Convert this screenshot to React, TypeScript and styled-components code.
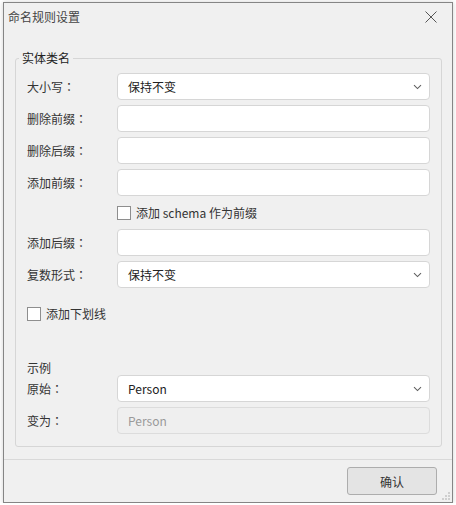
import styled, { createGlobalStyle } from "styled-components";

const GlobalStyle = createGlobalStyle`
  html, body {
    margin: 0;
    padding: 0;
    background: #ffffff;
  }
  body {
    font-family: "Noto Sans CJK SC", "Noto Sans", sans-serif;
    font-size: 12px;
    color: #333;
  }
`;

// styled components
const Window = styled.div`
  position: relative;
  box-sizing: border-box;
  width: 450px;
  height: 501px;
  margin: 2px 0 0 3px;
  border: 1px solid #858585;
  background: #f0f0f0;
  display: flex;
  flex-direction: column;
  box-shadow: 0 0 5px rgba(0, 0, 0, 0.18);
`;

const TitleBar = styled.div`
  height: 28px;
  display: flex;
  align-items: center;
  justify-content: space-between;
  padding: 0 15px 0 4px;
`;

const Title = styled.span`
  font-size: 12px;
  line-height: 16px;
  color: #444;
`;

const CloseButton = styled.button`
  border: 0;
  padding: 0;
  background: transparent;
  width: 12px;
  height: 12px;
  display: flex;
  align-items: center;
  justify-content: center;
  cursor: pointer;
`;

const Body = styled.div`
  flex: 1;
  padding: 27px 10px 0 11px;
`;

const Group = styled.div`
  position: relative;
  box-sizing: border-box;
  border: 1px solid #d6d6d6;
  border-radius: 3px;
  padding: 14px 11px 12px 11px;
`;

const Legend = styled.span`
  position: absolute;
  top: -9px;
  left: 3px;
  padding: 0 3px;
  background: #f0f0f0;
  line-height: 16px;
  color: #222;
`;

const Stack = styled.div`
  display: flex;
  flex-direction: column;
  gap: 5px;
`;

const Row = styled.div<{ $mt?: number }>`
  display: grid;
  grid-template-columns: 90px 1fr;
  align-items: center;
  height: 27px;
  margin-top: ${(p) => p.$mt ?? 0}px;
`;

const Label = styled.label`
  line-height: 16px;
  color: #333;
`;

// the traditional-Chinese face centres the full-width colon, as the reference does
const Colon = styled.span`
  font-family: "Noto Sans CJK TC", "Noto Sans CJK SC", sans-serif;
`;

const TextInput = styled.input`
  box-sizing: border-box;
  width: 100%;
  height: 27px;
  margin: 0;
  padding: 0 10px;
  border: 1px solid #d6d6d6;
  border-radius: 4px;
  background: #fff;
  font: inherit;
  color: #222;
  outline: none;

  &:disabled {
    background: #efefef;
    border-color: #dcdcdc;
    color: #9a9a9a;
  }
`;

const SelectBox = styled.div`
  box-sizing: border-box;
  height: 27px;
  display: flex;
  align-items: center;
  justify-content: space-between;
  padding: 0 7px 0 10px;
  border: 1px solid #d6d6d6;
  border-radius: 4px;
  background: #fff;
  color: #222;
  line-height: 16px;
`;

const CheckRow = styled.div<{ $indent?: number; $mt?: number }>`
  display: flex;
  align-items: center;
  gap: 5px;
  height: 23px;
  margin-left: ${(p) => p.$indent ?? 0}px;
  margin-top: ${(p) => p.$mt ?? 0}px;
  line-height: 16px;
  color: #333;
`;

const CheckBox = styled.span`
  box-sizing: border-box;
  width: 14px;
  height: 14px;
  border: 1px solid #8e8e8e;
  background: #fff;
`;

const SectionTitle = styled.div`
  height: 15px;
  line-height: 15px;
  margin-top: 30px;
  margin-bottom: -5px;
  color: #333;
`;

const Footer = styled.div`
  height: 43px;
  box-sizing: border-box;
  border-top: 1px solid #d9d9d9;
  display: flex;
  justify-content: flex-end;
  align-items: flex-start;
  padding: 7px 15px 0 0;
`;

const PrimaryButton = styled.button`
  width: 90px;
  height: 28px;
  border: 1px solid #adadad;
  border-radius: 3px;
  background: #e4e4e4;
  font: inherit;
  color: #333;
  cursor: pointer;
`;

const Grip = styled.svg`
  position: absolute;
  right: 1px;
  bottom: 1px;
`;

const Chevron = () => (
  <svg width="9" height="6" viewBox="0 0 9 6">
    <path d="M1 1.2 L4.5 4.6 L8 1.2" fill="none" stroke="#606060" strokeWidth="1.1" />
  </svg>
);

type FieldProps = { label: string; mt?: number; children: React.ReactNode };

function Field({ label, mt, children }: FieldProps) {
  return (
    <Row $mt={mt}>
      <Label>
        {label}
        <Colon>：</Colon>
      </Label>
      {children}
    </Row>
  );
}

function Select({ value }: { value: string }) {
  return (
    <SelectBox>
      <span>{value}</span>
      <Chevron />
    </SelectBox>
  );
}

export default function App() {
  return (
    <>
      <GlobalStyle />
      <Window>
        <TitleBar>
          <Title>命名规则设置</Title>
          <CloseButton aria-label="关闭">
            <svg width="12" height="12" viewBox="0 0 12 12">
              <path d="M0.5 0.5 L11.5 11.5 M11.5 0.5 L0.5 11.5" stroke="#555" strokeWidth="1" />
            </svg>
          </CloseButton>
        </TitleBar>

        <Body>
          <Group>
            <Legend>实体类名</Legend>
            <Stack>
              <Field label="大小写">
                <Select value="保持不变" />
              </Field>
              <Field label="删除前缀">
                <TextInput readOnly />
              </Field>
              <Field label="删除后缀">
                <TextInput readOnly />
              </Field>
              <Field label="添加前缀">
                <TextInput readOnly />
              </Field>
              <CheckRow $indent={90}>
                <CheckBox />
                添加 schema 作为前缀
              </CheckRow>
              <Field label="添加后缀">
                <TextInput readOnly />
              </Field>
              <Field label="复数形式">
                <Select value="保持不变" />
              </Field>
              <CheckRow $mt={9}>
                <CheckBox />
                添加下划线
              </CheckRow>

              <SectionTitle>示例</SectionTitle>
              <Field label="原始">
                <Select value="Person" />
              </Field>
              <Field label="变为">
                <TextInput disabled value="Person" />
              </Field>
            </Stack>
          </Group>
        </Body>

        <Footer>
          <PrimaryButton>确认</PrimaryButton>
        </Footer>

        <Grip width="10" height="10" viewBox="0 0 10 10">
          {[
            [8, 2],
            [5, 5],
            [8, 5],
            [2, 8],
            [5, 8],
            [8, 8],
          ].map(([x, y]) => (
            <rect key={`${x}-${y}`} x={x - 1} y={y - 1} width="2" height="2" fill="#cfcfcf" />
          ))}
        </Grip>
      </Window>
    </>
  );
}
